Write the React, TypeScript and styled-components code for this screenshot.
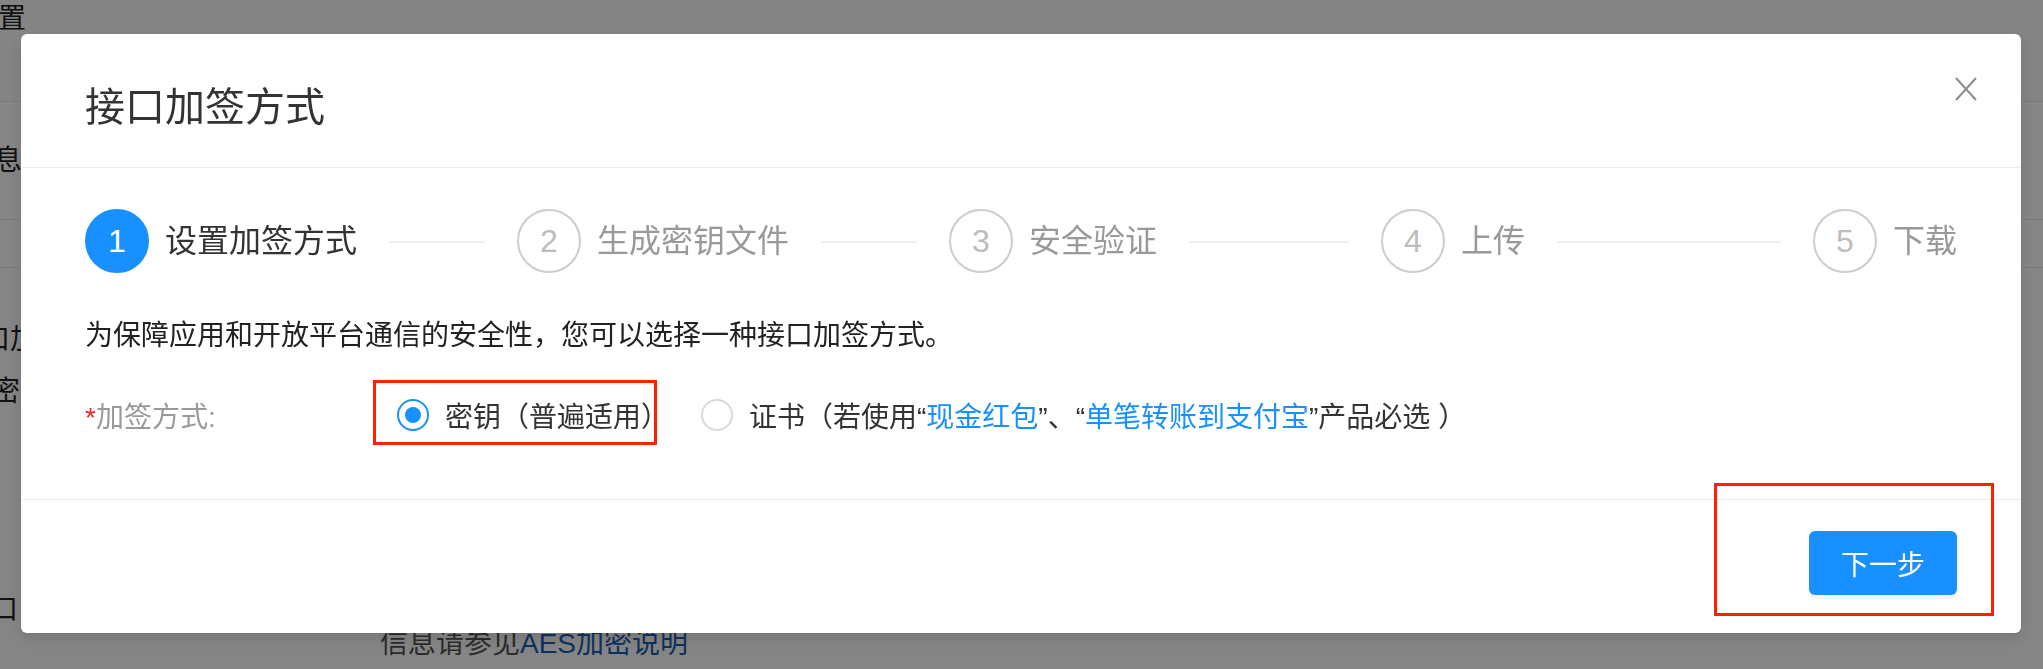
import React from "react";
import styled, { createGlobalStyle } from "styled-components";

const GlobalStyle = createGlobalStyle`
  html, body {
    margin: 0;
    padding: 0;
  }
  body {
    width: 2043px;
    height: 669px;
    overflow: hidden;
    background: #fff;
    font-family: "Liberation Sans", "Noto Sans CJK SC", sans-serif;
  }
`;

/* 背景页面（被遮罩盖住） */
const Page = styled.div`
  width: 2043px;
  height: 669px;
  overflow: hidden;
  background: #fff;
  color: #222;
  font-size: 28px;
`;

const PageBand = styled.div<{ $height: number; $bg?: string }>`
  height: ${(p) => p.$height}px;
  box-sizing: border-box;
  background: ${(p) => p.$bg || "#fff"};
  border-bottom: 1px solid #ececec;
  display: flex;
  flex-direction: column;
`;

const PageText = styled.div<{ $top: number; $left: number; $color?: string }>`
  margin-top: ${(p) => p.$top}px;
  margin-left: ${(p) => p.$left}px;
  line-height: 40px;
  white-space: nowrap;
  color: ${(p) => p.$color || "#222"};
`;

const PageLink = styled.span`
  color: #1a5fb4;
`;

/* 遮罩与弹窗 */
const Mask = styled.div`
  position: fixed;
  inset: 0;
  background: rgba(0, 0, 0, 0.48);
  display: flex;
  align-items: flex-start;
  padding: 34px 0 0 21px;
`;

const Modal = styled.div`
  width: 2000px;
  background: #fff;
  border-radius: 6px;
  box-shadow: 0 6px 16px rgba(0, 0, 0, 0.12);
  color: #333;
`;

const Header = styled.div`
  height: 134px;
  box-sizing: border-box;
  display: flex;
  justify-content: space-between;
  align-items: flex-start;
  padding: 0 43px 0 64px;
  border-bottom: 1px solid #ececec;
`;

const Title = styled.div`
  margin-top: 45px;
  font-size: 40px;
  line-height: 56px;
  color: #333;
`;

const CloseButton = styled.button`
  margin-top: 42px;
  width: 24px;
  height: 26px;
  padding: 0;
  border: none;
  background: none;
  cursor: pointer;
  display: flex;
`;

const Body = styled.div`
  padding: 41px 64px 60px;
`;

const Steps = styled.div`
  display: flex;
  align-items: center;
`;

const StepItem = styled.div<{ $first: boolean; $last: boolean }>`
  display: flex;
  align-items: center;
  flex: ${(p) => (p.$last ? "none" : "1")};
  overflow: hidden;
  padding-left: ${(p) => (p.$first ? 0 : 32)}px;
`;

const StepIcon = styled.div<{ $active: boolean }>`
  flex: none;
  width: 64px;
  height: 64px;
  box-sizing: border-box;
  border-radius: 50%;
  border: 2px solid ${(p) => (p.$active ? "#1890ff" : "#cccccc")};
  background: ${(p) => (p.$active ? "#1890ff" : "#fff")};
  color: ${(p) => (p.$active ? "#fff" : "#bdbdbd")};
  display: flex;
  align-items: center;
  justify-content: center;
  font-size: 32px;
  margin-right: 16px;
`;

const StepTitle = styled.div<{ $active: boolean; $last: boolean }>`
  position: relative;
  font-size: 32px;
  line-height: 64px;
  white-space: nowrap;
  padding-right: ${(p) => (p.$last ? 0 : 32)}px;
  color: ${(p) => (p.$active ? "#333" : "#999")};

  &::after {
    content: "";
    display: ${(p) => (p.$last ? "none" : "block")};
    position: absolute;
    top: 50%;
    left: 100%;
    width: 9999px;
    height: 2px;
    background: #f0f0f0;
  }
`;

const Desc = styled.div`
  margin-top: 43px;
  font-size: 28px;
  line-height: 40px;
  color: #222;
`;

const FormRow = styled.div`
  margin-top: 35px;
  height: 48px;
  display: flex;
  align-items: center;
  font-size: 28px;
`;

const FormLabel = styled.div`
  width: 312px;
  flex: none;
  color: #999;
`;

const Required = styled.span`
  color: #f5222d;
`;

const RadioGroup = styled.div`
  display: flex;
  align-items: center;
  gap: 32px;
`;

const RadioOption = styled.label`
  position: relative;
  display: flex;
  align-items: center;
  gap: 16px;
  color: #333;
  white-space: nowrap;
  cursor: pointer;
`;

const RadioCircle = styled.span<{ $checked: boolean }>`
  flex: none;
  width: 32px;
  height: 32px;
  box-sizing: border-box;
  border-radius: 50%;
  border: 2px solid ${(p) => (p.$checked ? "#1890ff" : "#d9d9d9")};
  display: flex;
  align-items: center;
  justify-content: center;

  &::after {
    content: "";
    display: ${(p) => (p.$checked ? "block" : "none")};
    width: 16px;
    height: 16px;
    border-radius: 50%;
    background: #1890ff;
  }
`;

const Link = styled.span`
  color: #1890ff;
`;

/* 红框标注 */
const Highlight = styled.span<{ $inset: string }>`
  position: absolute;
  inset: ${(p) => p.$inset};
  border: 3px solid #ff2000;
  pointer-events: none;
`;

const Footer = styled.div`
  display: flex;
  justify-content: flex-end;
  padding: 31px 64px 38px;
  border-top: 1px solid #ececec;
`;

const ButtonWrap = styled.div`
  position: relative;
`;

const PrimaryButton = styled.button`
  width: 148px;
  height: 64px;
  border: none;
  border-radius: 6px;
  background: #1890ff;
  color: #fff;
  font-family: inherit;
  font-size: 28px;
  box-shadow: 0 4px 0 rgba(0, 0, 0, 0.045);
  cursor: pointer;
`;

const steps = ["设置加签方式", "生成密钥文件", "安全验证", "上传", "下载"];

const App = () => {
  const current = 0;

  return (
    <>
      <GlobalStyle />
      <Page>
        <PageBand $height={102} $bg="#fdfdfd">
          <PageText $top={-1} $left={-2}>置</PageText>
        </PageBand>
        <PageBand $height={118}>
          <PageText $top={39} $left={-6}>息</PageText>
        </PageBand>
        <PageBand $height={48} />
        <PageText $top={52} $left={-18}>口加</PageText>
        <PageText $top={12} $left={-8}>密</PageText>
        <PageText $top={178} $left={-10}>口</PageText>
        <PageText $top={-6} $left={380} $color="#555">
          信息请参见<PageLink>AES加密说明</PageLink>
        </PageText>
      </Page>

      <Mask>
        <Modal>
          <Header>
            <Title>接口加签方式</Title>
            <CloseButton aria-label="关闭">
              <svg width="24" height="26" viewBox="0 0 24 26">
                <path d="M2 2 L22 24 M22 2 L2 24" stroke="#8c8c8c" strokeWidth="2" fill="none" />
              </svg>
            </CloseButton>
          </Header>

          <Body>
            <Steps>
              {steps.map((s, i) => (
                <StepItem key={s} $first={i === 0} $last={i === steps.length - 1}>
                  <StepIcon $active={i === current}>{i + 1}</StepIcon>
                  <StepTitle $active={i === current} $last={i === steps.length - 1}>
                    {s}
                  </StepTitle>
                </StepItem>
              ))}
            </Steps>

            <Desc>为保障应用和开放平台通信的安全性，您可以选择一种接口加签方式。</Desc>

            <FormRow>
              <FormLabel>
                <Required>*</Required>加签方式:
              </FormLabel>
              <RadioGroup>
                <RadioOption>
                  <RadioCircle $checked />
                  密钥（普遍适用）
                  <Highlight $inset="-15px 12px -10px -24px" />
                </RadioOption>
                <RadioOption>
                  <RadioCircle $checked={false} />
                  <span>
                    证书（若使用“<Link>现金红包</Link>”、“<Link>单笔转账到支付宝</Link>”产品必选 ）
                  </span>
                </RadioOption>
              </RadioGroup>
            </FormRow>
          </Body>

          <Footer>
            <ButtonWrap>
              <PrimaryButton>下一步</PrimaryButton>
              <Highlight $inset="-48px -37px -21px -95px" />
            </ButtonWrap>
          </Footer>
        </Modal>
      </Mask>
    </>
  );
};

export default App;
